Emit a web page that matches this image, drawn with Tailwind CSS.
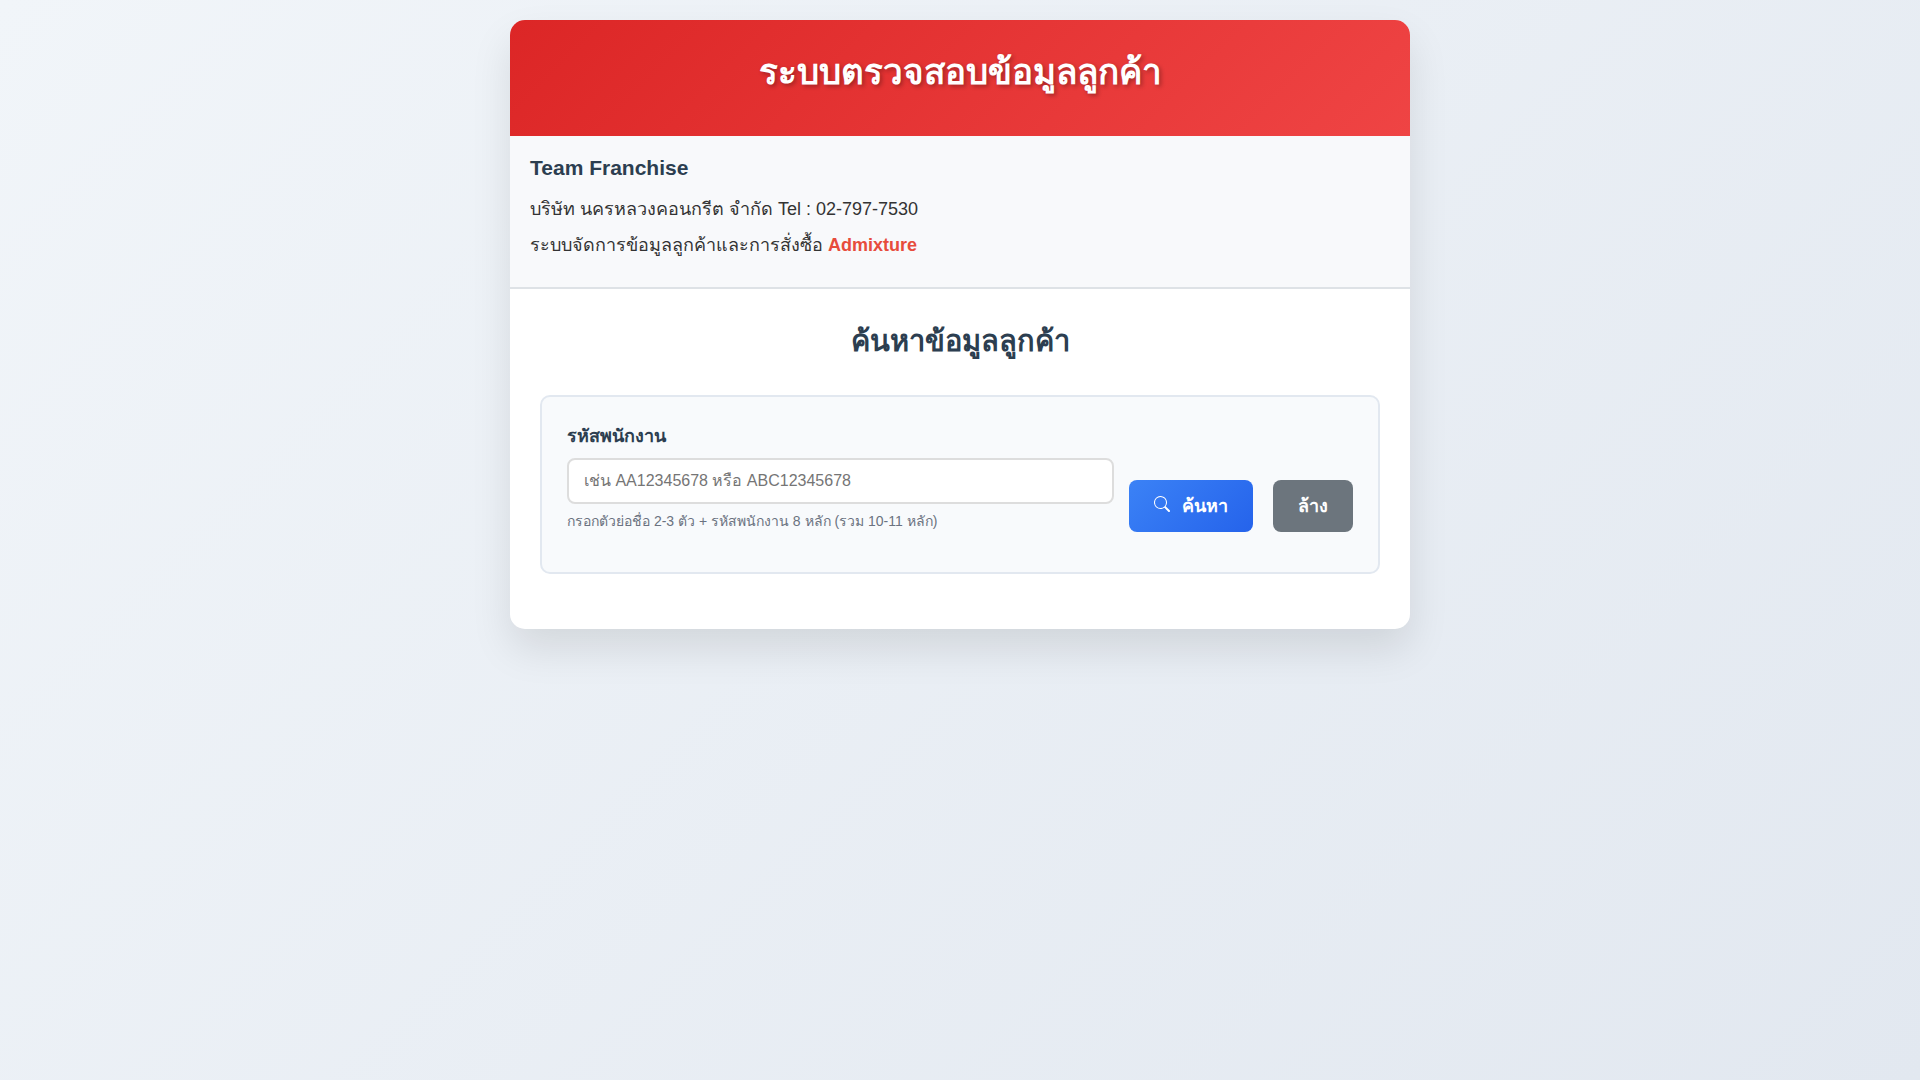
<!DOCTYPE html>
<html lang="th">

<head>
    <meta charset="UTF-8">
    <meta name="viewport" content="width=device-width, initial-scale=1.0">
    <title>ระบบตรวจสอบข้อมูลลูกค้า</title>
    <script src="https://cdn.jsdelivr.net/npm/@tailwindcss/browser@4"></script>
</head>

<body class="min-h-screen p-5 font-['Liberation_Sans',sans-serif] text-[#333333] bg-[linear-gradient(135deg,#f1f5f9,#e2e8f0)]">

    <div class="mx-auto max-w-[900px] overflow-hidden rounded-[15px] bg-white shadow-[0_20px_40px_rgba(0,0,0,0.1)]">

        <header class="bg-[linear-gradient(135deg,#dc2626,#ef4444)] px-5 pt-[30px] pb-[42px] text-center text-white">
            <h1 class="text-[35px] leading-11 font-bold [text-shadow:2px_2px_4px_rgba(0,0,0,0.3)]">ระบบตรวจสอบข้อมูลลูกค้า</h1>
        </header>

        <section class="border-b-2 border-[#dee2e6] bg-[#f8f9fb] px-5 pt-5 pb-6">
            <h2 class="mb-[11px] text-[21px] leading-6 font-bold text-[#2c3e50]">Team Franchise</h2>
            <p class="text-lg leading-9">บริษัท นครหลวงคอนกรีต จำกัด Tel : 02-797-7530</p>
            <p class="text-lg leading-9">ระบบจัดการข้อมูลลูกค้าและการสั่งซื้อ <strong class="text-[#e74c3c]">Admixture</strong></p>
        </section>

        <main class="px-[30px] pt-[30px] pb-[55px]">
            <h2 class="mb-8 text-center text-[29px] leading-11 font-bold text-[#2c3e50]">ค้นหาข้อมูลลูกค้า</h2>

            <form class="flex items-end gap-[15px] rounded-[10px] border-2 border-[#e2e8f0] bg-[#f8fafc] px-[25px] pt-[25px] pb-10">
                <div class="min-w-0 flex-1">
                    <label for="employeeCode" class="mb-2 block text-lg leading-7 font-bold text-[#2c3e50]">รหัสพนักงาน</label>
                    <input id="employeeCode" type="text" placeholder="เช่น AA12345678 หรือ ABC12345678"
                        class="block h-[46px] w-full rounded-lg border-2 border-[#dddddd] bg-white px-[15px] text-base placeholder:text-[#757575]">
                    <p class="mt-[7px] text-sm leading-[21px] text-[#6b7280]">กรอกตัวย่อชื่อ 2-3 ตัว + รหัสพนักงาน 8 หลัก (รวม 10-11 หลัก)</p>
                </div>
                <div class="flex gap-5">
                    <button type="submit" class="flex h-[52px] items-center gap-3 rounded-lg bg-[linear-gradient(135deg,#3b82f6,#2563eb)] px-[25px] text-lg font-bold text-white">
                        <svg class="mb-1 size-4" viewBox="0 0 16 16" fill="currentColor" aria-hidden="true">
                            <path d="M11.742 10.344a6.5 6.5 0 1 0-1.397 1.398h-.001c.03.04.062.078.098.115l3.85 3.85a1 1 0 0 0 1.415-1.414l-3.85-3.85a1.007 1.007 0 0 0-.115-.1zM12 6.5a5.5 5.5 0 1 1-11 0 5.5 5.5 0 0 1 11 0z" />
                        </svg>
                        ค้นหา
                    </button>
                    <button type="reset" class="h-[52px] rounded-lg bg-[#6c757d] px-[25px] text-lg font-bold text-white">ล้าง</button>
                </div>
            </form>
        </main>
    </div>

</body>

</html>
